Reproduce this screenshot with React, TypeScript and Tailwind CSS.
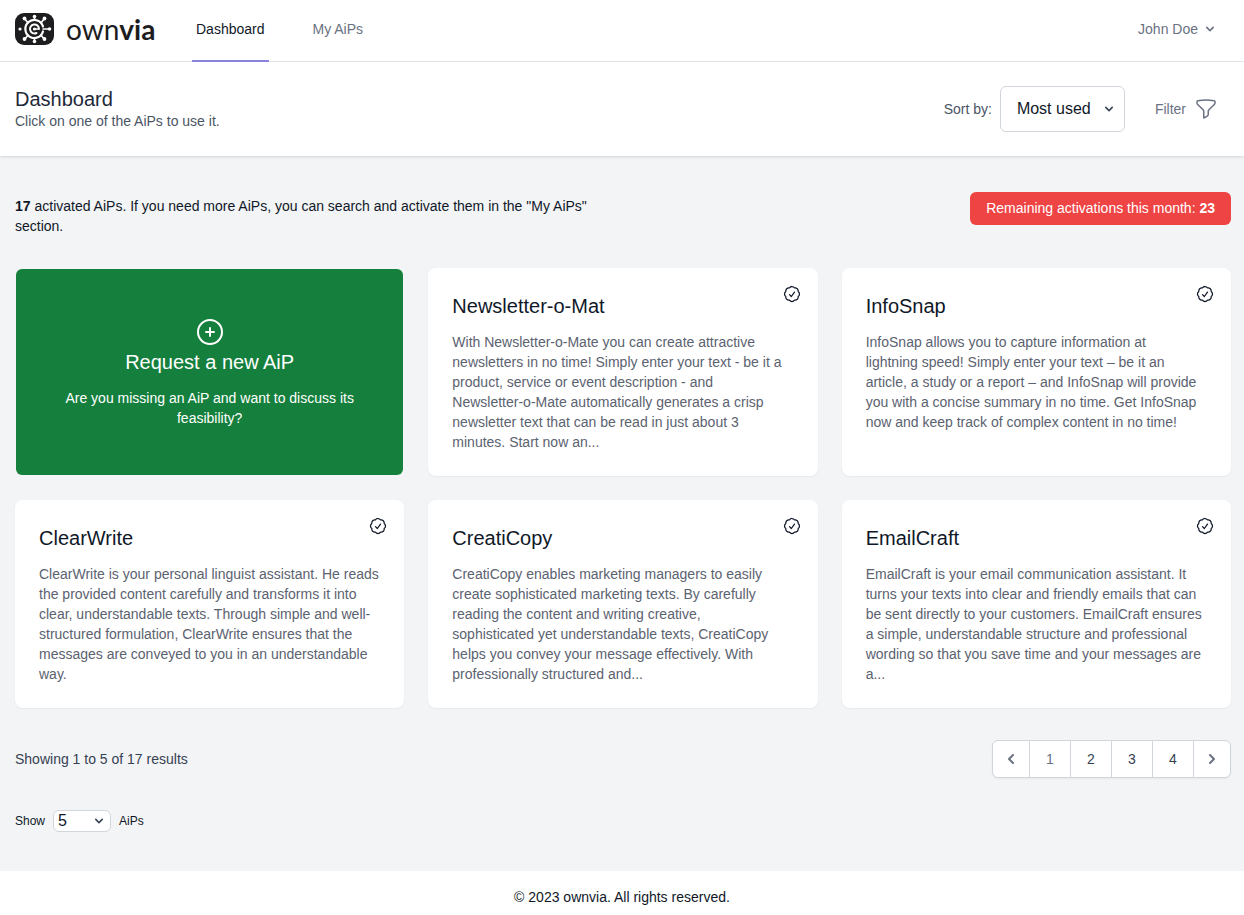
import { useState } from 'react';
import { HiChevronDown, HiChevronLeft, HiChevronRight } from 'react-icons/hi';
import { HiOutlineCheckBadge, HiOutlineFunnel, HiOutlinePlusCircle } from 'react-icons/hi2';

// Line breaks in the descriptions are kept as they were entered
const AIPS = [
  {
    name: 'Newsletter-o-Mat',
    text: 'With Newsletter-o-Mate you can create attractive newsletters in no time! Simply enter your text - be it a product, service or event description - and\nNewsletter-o-Mate automatically generates a crisp\nnewsletter text that can be read in just about 3\nminutes. Start now an...',
  },
  {
    name: 'InfoSnap',
    text: 'InfoSnap allows you to capture information at\nlightning speed! Simply enter your text – be it an\narticle, a study or a report – and InfoSnap will provide\nyou with a concise summary in no time. Get InfoSnap\nnow and keep track of complex content in no time!',
  },
  {
    name: 'ClearWrite',
    text: 'ClearWrite is your personal linguist assistant. He reads the provided content carefully and transforms it into clear, understandable texts. Through simple and well-structured formulation, ClearWrite ensures that the messages are conveyed to you in an understandable way.',
  },
  {
    name: 'CreatiCopy',
    text: 'CreatiCopy enables marketing managers to easily create sophisticated marketing texts. By carefully reading the content and writing creative,\nsophisticated yet understandable texts, CreatiCopy\nhelps you convey your message effectively. With\nprofessionally structured and...',
  },
  {
    name: 'EmailCraft',
    text: 'EmailCraft is your email communication assistant. It turns your texts into clear and friendly emails that can be sent directly to your customers. EmailCraft ensures a simple, understandable structure and professional wording so that you save time and your messages are a...',
  },
];

function Logo() {
  return (
    <a href="#" className="flex items-center gap-3 text-[#1d1d1f]">
      <svg className="h-8 w-[39px]" viewBox="0 0 39 32" fill="none" aria-hidden>
        <rect width="39" height="32" rx="9" fill="#1d1d1f" />
        <g stroke="#fff" strokeWidth="1.6" strokeLinecap="round">
          <path d="M19.5 7V4M19.5 25v3M28 16h6M13 10L10 6M26 10L29 6M13 22L10 26M26 22L29 26" />
          <path d="M28 18.5A9 9 0 1 1 28 13.500" strokeWidth="2.200" />
          <path d="M24 16A4.500 4.500 0 1 0 21.500 20" strokeWidth="2" />
          <path d="M19.500 16h4" strokeWidth="1.400" />
        </g>
        <g fill="#fff">
          <circle cx="19.5" cy="3.600" r="1.800" />
          <circle cx="19.5" cy="28.500" r="1.800" />
          <circle cx="5" cy="16" r="1.600" />
          <circle cx="34.500" cy="16" r="1.800" />
          <circle cx="9.500" cy="5.500" r="1.900" />
          <circle cx="29.500" cy="5.500" r="1.900" />
          <circle cx="9.500" cy="26" r="1.900" />
          <circle cx="29.500" cy="26" r="1.900" />
          <circle cx="19.500" cy="16" r="1.600" />
        </g>
      </svg>
      <span className="font-[Lato] text-[28px] leading-8">
        own<span className="font-bold">via</span>
      </span>
    </a>
  );
}

function AipCard({ name, text }: { name: string; text: string }) {
  return (
    <article className="relative rounded-lg bg-white p-6 shadow-xs">
      <HiOutlineCheckBadge className="absolute top-4 right-4 h-5 w-5 text-gray-900" />
      <h3 className="text-xl leading-7 text-gray-900">{name}</h3>
      <p className="mt-3 text-sm leading-5 whitespace-pre-line text-[#5b6270]">{text}</p>
    </article>
  );
}

export default function App() {
  const [sort, setSort] = useState('Most used');
  const [perPage, setPerPage] = useState('5');
  const [page, setPage] = useState(1);

  return (
    <div className="flex min-h-screen flex-col bg-gray-100 font-['Liberation_Sans',sans-serif] text-gray-900">
      {/* Navigation */}
      <nav className="flex h-[62px] items-stretch justify-between border-b border-gray-200 bg-white pr-[13px] pl-[15px]">
        <div className="flex">
          <div className="flex h-[58px] w-[137px] items-center">
            <Logo />
          </div>
          <div className="-mb-px ml-10 flex gap-10 text-sm">
            <a href="#" className="border-b-2 border-[#8b85e0] px-1 pt-[19px] leading-5 text-gray-900">
              Dashboard
            </a>
            <a href="#" className="border-b-2 border-transparent px-1 pt-[19px] leading-5 text-gray-500">
              My AiPs
            </a>
          </div>
        </div>
        <button className="flex h-[57px] items-center gap-1 pr-[13px] text-sm text-gray-500">
          John Doe
          <HiChevronDown className="h-4 w-4" />
        </button>
      </nav>

      {/* Page heading */}
      <header className="z-10 flex items-center justify-between bg-white py-6 pr-[13px] pl-[15px] shadow-sm">
        <div>
          <h1 className="text-xl leading-6 font-medium text-gray-800">Dashboard</h1>
          <p className="text-sm leading-5 text-gray-600">Click on one of the AiPs to use it.</p>
        </div>
        <div className="flex items-center">
          <label htmlFor="sort" className="mr-2 text-sm text-gray-600">
            Sort by:
          </label>
          <div className="relative">
            <select
              id="sort"
              value={sort}
              onChange={(e) => setSort(e.target.value)}
              className="h-[46px] w-[125px] appearance-none rounded-md border border-gray-300 bg-white px-4 text-base text-gray-900"
            >
              <option>Most used</option>
              <option>Newest</option>
              <option>Name</option>
            </select>
            <HiChevronDown className="pointer-events-none absolute top-[15px] right-2 h-4 w-4 text-gray-700" />
          </div>
          <button className="ml-[30px] flex items-center gap-2 pr-[13px] text-sm text-gray-500">
            Filter
            <HiOutlineFunnel className="h-6 w-6" />
          </button>
        </div>
      </header>

      {/* Content */}
      <main className="flex-1 pt-9 pr-[13px] pb-[39px] pl-[15px]">
        <div className="flex items-start justify-between">
          <p className="w-1/2 pt-1 text-sm leading-5">
            <b>17</b> activated AiPs. If you need more AiPs, you can search and activate them in the "My AiPs" section.
          </p>
          <p className="rounded-md bg-[#ef4444] px-4 py-[6px] text-sm leading-[21px] text-white">
            Remaining activations this month: <b>23</b>
          </p>
        </div>

        <div className="mt-8 grid grid-cols-3 gap-6">
          <button className="m-px flex flex-col items-center justify-center rounded-md bg-[#15803d] px-6 text-white">
            <HiOutlinePlusCircle className="h-8 w-8" />
            <span className="text-xl leading-7 font-medium">Request a new AiP</span>
            <span className="mt-3 text-sm leading-5">Are you missing an AiP and want to discuss its feasibility?</span>
          </button>
          {AIPS.map((aip) => (
            <AipCard key={aip.name} {...aip} />
          ))}
        </div>

        <div className="mt-8 flex items-center justify-between">
          <p className="text-sm leading-5 text-gray-700">Showing 1 to 5 of 17 results</p>
          <div className="flex h-[38px] divide-x divide-gray-300 overflow-hidden rounded-md border border-gray-300 bg-white text-sm text-gray-700 shadow-xs">
            <button aria-label="Previous" className="px-2 text-gray-500">
              <HiChevronLeft className="h-5 w-5" />
            </button>
            {[1, 2, 3, 4].map((n) => (
              <button key={n} onClick={() => setPage(n)} className={`w-[41px] ${n === page ? 'text-gray-500' : ''}`}>
                {n}
              </button>
            ))}
            <button aria-label="Next" className="px-2 text-gray-500">
              <HiChevronRight className="h-5 w-5" />
            </button>
          </div>
        </div>

        <div className="mt-8 flex items-center text-xs text-gray-900">
          <label htmlFor="per-page" className="mr-2">
            Show
          </label>
          <div className="relative">
            <select
              id="per-page"
              value={perPage}
              onChange={(e) => setPerPage(e.target.value)}
              className="block h-[22px] w-[58px] appearance-none rounded-md border border-gray-300 bg-white px-1 text-base leading-5"
            >
              <option>5</option>
              <option>10</option>
              <option>20</option>
            </select>
            <HiChevronDown className="pointer-events-none absolute top-[3px] right-1 h-4 w-4 text-gray-700" />
          </div>
          <span className="ml-2">AiPs</span>
        </div>
      </main>

      <footer className="bg-white pt-4 pb-2 text-center text-sm leading-5 shadow-xs">
        © 2023 ownvia. All rights reserved.
      </footer>
    </div>
  );
}
